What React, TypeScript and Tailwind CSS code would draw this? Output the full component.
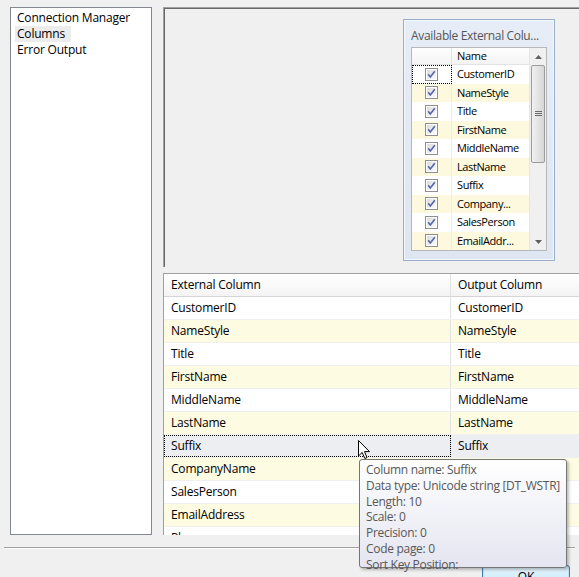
import type { ReactNode } from "react";

const FONT = { fontFamily: '"Segoe UI", "Open Sans", "Noto Sans", sans-serif' };

const MINI_ROWS = [
  "CustomerID",
  "NameStyle",
  "Title",
  "FirstName",
  "MiddleName",
  "LastName",
  "Suffix",
  "Company...",
  "SalesPerson",
  "EmailAddr...",
];

const GRID_ROWS = [
  "CustomerID",
  "NameStyle",
  "Title",
  "FirstName",
  "MiddleName",
  "LastName",
  "Suffix",
  "CompanyName",
  "SalesPerson",
  "EmailAddress",
  "Phone",
];

const TIP = [
  "Column name: Suffix",
  "Data type: Unicode string [DT_WSTR]",
  "Length: 10",
  "Scale: 0",
  "Precision: 0",
  "Code page: 0",
  "Sort Key Position:",
];

function Check() {
  return (
    <svg width="13" height="13" viewBox="0 0 13 13">
      <defs>
        <linearGradient id="cbg" x1="0" y1="0" x2="1" y2="1">
          <stop offset="0" stopColor="#dcdcdc" />
          <stop offset="1" stopColor="#fbfbfb" />
        </linearGradient>
      </defs>
      <rect x="0.5" y="0.5" width="12" height="12" fill="#fff" stroke="#8e8f8f" />
      <rect x="2" y="2" width="9" height="9" fill="url(#cbg)" />
      <path d="M3.2 6.3 L5.3 9 L9.8 3.2" fill="none" stroke="#5563ab" strokeWidth="1.6" />
    </svg>
  );
}

function MiniRow({ name, i }: { name: string; i: number }) {
  const bg = i % 2 === 1 ? "bg-[#fcf9df]" : "bg-white";
  return (
    <div className={`flex h-[19px] ${bg}`}>
      <div
        className={`flex w-[40px] items-center justify-center border-r border-[#ececec] ${
          i === 0 ? "outline outline-1 outline-dotted outline-black -outline-offset-1" : ""
        }`}
      >
        <Check />
      </div>
      <div className="flex flex-1 items-center pl-[5px] text-[11px] tracking-[-0.4px] text-black">{name}</div>
    </div>
  );
}

function ScrollBar() {
  return (
    <div className="flex w-[17px] flex-col items-center bg-[#f0f0f0] border-l border-[#e6e6e6]">
      <div className="flex h-[17px] w-full items-center justify-center">
        <svg width="7" height="4" viewBox="0 0 7 4">
          <path d="M0 4 L3.5 0 L7 4 Z" fill="#606060" />
        </svg>
      </div>
      <div className="flex h-[98px] w-[14px] items-center justify-center rounded-[2px] border border-[#9b9b9b] bg-gradient-to-r from-[#f1f1f1] to-[#d6d6d6]">
        <svg width="7" height="6" viewBox="0 0 7 6">
          <path d="M0 0.5 H7 M0 2.5 H7 M0 4.5 H7" stroke="#6b6b6b" strokeWidth="1" />
        </svg>
      </div>
      <div className="flex-1" />
      <div className="flex h-[17px] w-full items-center justify-center">
        <svg width="7" height="4" viewBox="0 0 7 4">
          <path d="M0 0 L3.5 4 L7 0 Z" fill="#606060" />
        </svg>
      </div>
    </div>
  );
}

function AvailableBox() {
  return (
    <div className="flex h-[242px] w-[152px] flex-col border border-[#9aaecb] bg-gradient-to-b from-[#e6edf7] to-[#dde6f2] px-[7px] pb-[9px] pt-[6px] shadow-[inset_0_0_0_1px_#f4f7fb]">
      <div className="h-[21px] overflow-hidden whitespace-nowrap text-[12px] leading-[20px] tracking-[-0.35px] text-[#555]">
        Available External Colu...
      </div>
      <div className="flex min-h-0 flex-1 overflow-hidden border border-[#b7b7b7] bg-white">
        <div className="flex min-w-0 flex-1 flex-col overflow-hidden">
          <div className="flex h-[17px] border-b border-[#e3e3e3] bg-gradient-to-b from-white to-[#f3f3f3]">
            <div className="w-[40px] border-r border-[#e3e3e3]" />
            <div className="flex-1 pl-[5px] text-[11px] leading-[16px] tracking-[-0.3px] text-black">Name</div>
          </div>
          {MINI_ROWS.map((n, i) => (
            <MiniRow key={n} name={n} i={i} />
          ))}
        </div>
        <ScrollBar />
      </div>
    </div>
  );
}

function Cell({ children, selected, focus, wide }: { children: ReactNode; selected?: boolean; focus?: boolean; wide?: boolean }) {
  return (
    <div
      className={`flex items-center pl-[7px] ${wide ? "w-[287px] border-r border-[#e2e2e2]" : "flex-1 pl-[6px]"} ${
        selected ? "bg-[#eceef2]" : ""
      } ${focus ? "outline outline-1 outline-dotted outline-black -outline-offset-1" : ""}`}
    >
      {children}
    </div>
  );
}

function MappingGrid() {
  return (
    <div className="flex h-[262px] flex-col overflow-hidden border-l border-t border-[#a0a0a0] bg-white tracking-[-0.2px]">
      <div className="flex h-[23px] shrink-0 border-b border-[#d5d5d5] bg-gradient-to-b from-white to-[#f4f4f4] text-[12px] text-black">
        <Cell wide>External Column</Cell>
        <Cell>Output Column</Cell>
      </div>
      {GRID_ROWS.map((n, i) => {
        const sel = n === "Suffix";
        const bg = sel ? "" : i % 2 === 1 ? "bg-[#fdfbe2]" : "bg-white";
        return (
          <div key={n} className={`flex h-[23px] shrink-0 border-b border-[#f0f0f0] text-[12px] text-black ${bg}`}>
            <Cell wide selected={sel} focus={sel}>
              {n}
            </Cell>
            <Cell selected={sel}>{n}</Cell>
          </div>
        );
      })}
    </div>
  );
}

function Cursor() {
  return (
    <svg width="13" height="20" viewBox="0 0 13 20" className="absolute left-[358px] top-[440px]">
      <path d="M0.5 0.5 V16 L4.2 12.4 L6.8 18.5 L9 17.5 L6.5 11.6 L11.5 11.6 Z" fill="#fff" stroke="#000" strokeWidth="1" strokeLinejoin="round" />
    </svg>
  );
}

function Tooltip() {
  return (
    <div className="absolute left-[359px] top-[459px] h-[109px] w-[208px] rounded-[3px] border border-[#767676] bg-gradient-to-b from-white to-[#e4e5f0] px-[6px] pt-[2px] text-[12px] leading-[15.8px] tracking-[-0.3px] text-[#575757] shadow-[2px_2px_3px_rgba(0,0,0,0.25)]">
      {TIP.map((t) => (
        <div key={t} className="whitespace-nowrap">
          {t}
        </div>
      ))}
    </div>
  );
}

export default function App() {
  return (
    <div className="relative h-[577px] w-[579px] overflow-hidden bg-[#f0f0f0]" style={FONT}>
      <div className="flex pl-[10px] pt-[7px]">
        <div className="h-[528px] w-[142px] shrink-0 border border-[#828790] bg-white px-[4px] pt-[2px] text-[12px] leading-[16px] tracking-[-0.2px] text-black">
          <div className="px-[2px]">Connection Manager</div>
          <div className="w-fit bg-[#ececec] px-[2px] pr-[6px]">Columns</div>
          <div className="px-[2px]">Error Output</div>
        </div>
        <div className="ml-[11px] flex w-[460px] shrink-0 flex-col gap-[6px]">
          <div className="h-[260px] border-l border-t border-[#a0a0a0] pl-[239px] pt-[11px] shadow-[inset_1px_1px_0_#696969]">
            <AvailableBox />
          </div>
          <MappingGrid />
        </div>
      </div>
      <div className="mx-[4px] mt-[12px] h-[2px] border-t border-b border-t-[#a0a0a0] border-b-white" />
      <div className="flex justify-end pr-[9px] pt-[16px]">
        <button className="h-[23px] w-[88px] rounded-[3px] border border-[#3c7fb1] bg-gradient-to-b from-[#eaf6fd] to-[#bee6fd] text-[12px] text-black shadow-[inset_0_0_0_1px_#c4e5f6]">
          OK
        </button>
      </div>
      <Cursor />
      <Tooltip />
    </div>
  );
}
